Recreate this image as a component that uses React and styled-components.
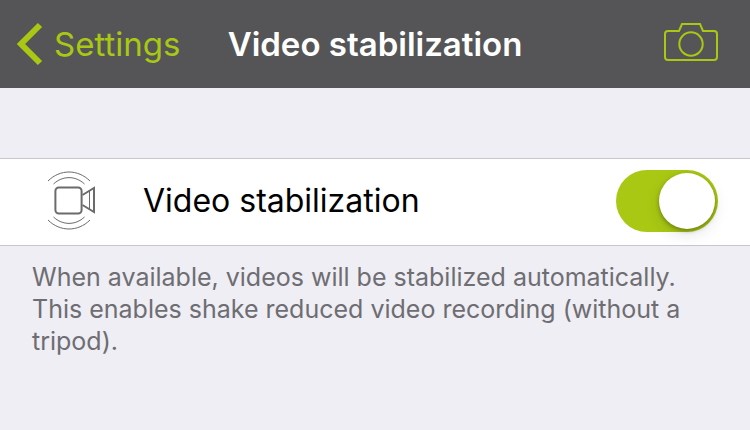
import { useState } from "react";
import styled, { createGlobalStyle } from "styled-components";

const GlobalStyle = createGlobalStyle`
  * {
    box-sizing: border-box;
  }

  body {
    margin: 0;
    background: #efeef4;
    font-family: Inter, "Liberation Sans", sans-serif;
  }
`;

const Navbar = styled.header`
  display: grid;
  grid-template-columns: 1fr auto 1fr;
  align-items: center;
  height: 88px;
  padding: 0 16px;
  background: #555557;
`;

const BackLink = styled.a`
  display: flex;
  align-items: center;
  gap: 11px;
  color: #a8c813;
  font-size: 33px;
  line-height: 40px;
  text-decoration: none;
`;

const Title = styled.h1`
  margin: 0;
  color: #fff;
  font-size: 33px;
  font-weight: 600;
  line-height: 40px;
`;

const CameraButton = styled.button`
  display: flex;
  justify-self: end;
  padding: 0 16px;
  border: none;
  background: none;
  color: #a8c813;
  cursor: pointer;
`;

const Main = styled.main`
  padding-top: 70px;
`;

const Row = styled.label`
  display: flex;
  align-items: center;
  height: 88px;
  padding: 0 32px 2px 46px;
  border-top: 1px solid #c8c7cc;
  border-bottom: 1px solid #c8c7cc;
  background: #fff;
  color: #000;
`;

const RowText = styled.span`
  flex: 1;
  padding-left: 45px;
  font-size: 32px;
  line-height: 40px;
`;

const Switch = styled.input`
  appearance: none;
  display: flex;
  align-items: center;
  width: 102px;
  height: 62px;
  margin: 0;
  padding: 0 3px;
  border-radius: 31px;
  background: ${(props) => (props.checked ? "#a8c813" : "#e5e5ea")};
  cursor: pointer;

  &::before {
    content: "";
    width: 56px;
    height: 56px;
    margin-left: ${(props) => (props.checked ? "auto" : "0")};
    border-radius: 50%;
    background: #fff;
    box-shadow: 0 2px 4px rgba(0, 0, 0, 0.3), 0 6px 16px rgba(0, 0, 0, 0.1);
  }
`;

const Hint = styled.p`
  margin: 0;
  padding: 15px 32px;
  color: #6d6d72;
  font-size: 25px;
  line-height: 32px;
`;

const ChevronIcon = () => (
  <svg width="27" height="44" viewBox="0 0 27 44" fill="none" aria-hidden="true">
    <path d="M24 3 5 22l19 19" stroke="currentColor" strokeWidth="6" />
  </svg>
);

const CameraIcon = () => (
  <svg
    width="54"
    height="42"
    viewBox="0 0 54 42"
    fill="none"
    stroke="currentColor"
    strokeWidth="2"
    aria-hidden="true"
  >
    <path d="M4 8h11l3-7h18l3 7h11a3 3 0 0 1 3 3v23a3 3 0 0 1-3 3H4a3 3 0 0 1-3-3V11a3 3 0 0 1 3-3Z" />
    <circle cx="27" cy="21" r="11.7" />
  </svg>
);

const StabilizationIcon = () => (
  <svg
    width="52"
    height="64"
    viewBox="0 1 52 64"
    fill="none"
    stroke="#6b6b6b"
    strokeWidth="2"
    aria-hidden="true"
  >
    <rect x="9.4" y="19.4" width="26.2" height="26.2" rx="3.5" />
    <path d="M36.5 27 48 20v24l-11.5-7" />
    <g strokeWidth="1">
      <path d="M43.5 23v18" />
      <path d="M2 13c12-12 30-12 42 0M7.500 16c9-8.500 22-8.500 31 0" />
      <path d="M2 52c12 12 30 12 42 0M7.500 49c9 8.500 22 8.500 31 0" />
    </g>
  </svg>
);

const App = () => {
  const [enabled, setEnabled] = useState(true);

  return (
    <>
      <GlobalStyle />
      <Navbar>
        <BackLink href="#settings">
          <ChevronIcon />
          Settings
        </BackLink>
        <Title>Video stabilization</Title>
        <CameraButton type="button" aria-label="Camera">
          <CameraIcon />
        </CameraButton>
      </Navbar>
      <Main>
        <Row>
          <StabilizationIcon />
          <RowText>Video stabilization</RowText>
          <Switch
            type="checkbox"
            role="switch"
            checked={enabled}
            onChange={(e) => setEnabled(e.target.checked)}
          />
        </Row>
        <Hint>
          When available, videos will be stabilized automatically. This enables
          shake reduced video recording (without a tripod).
        </Hint>
      </Main>
    </>
  );
};

export default App;
